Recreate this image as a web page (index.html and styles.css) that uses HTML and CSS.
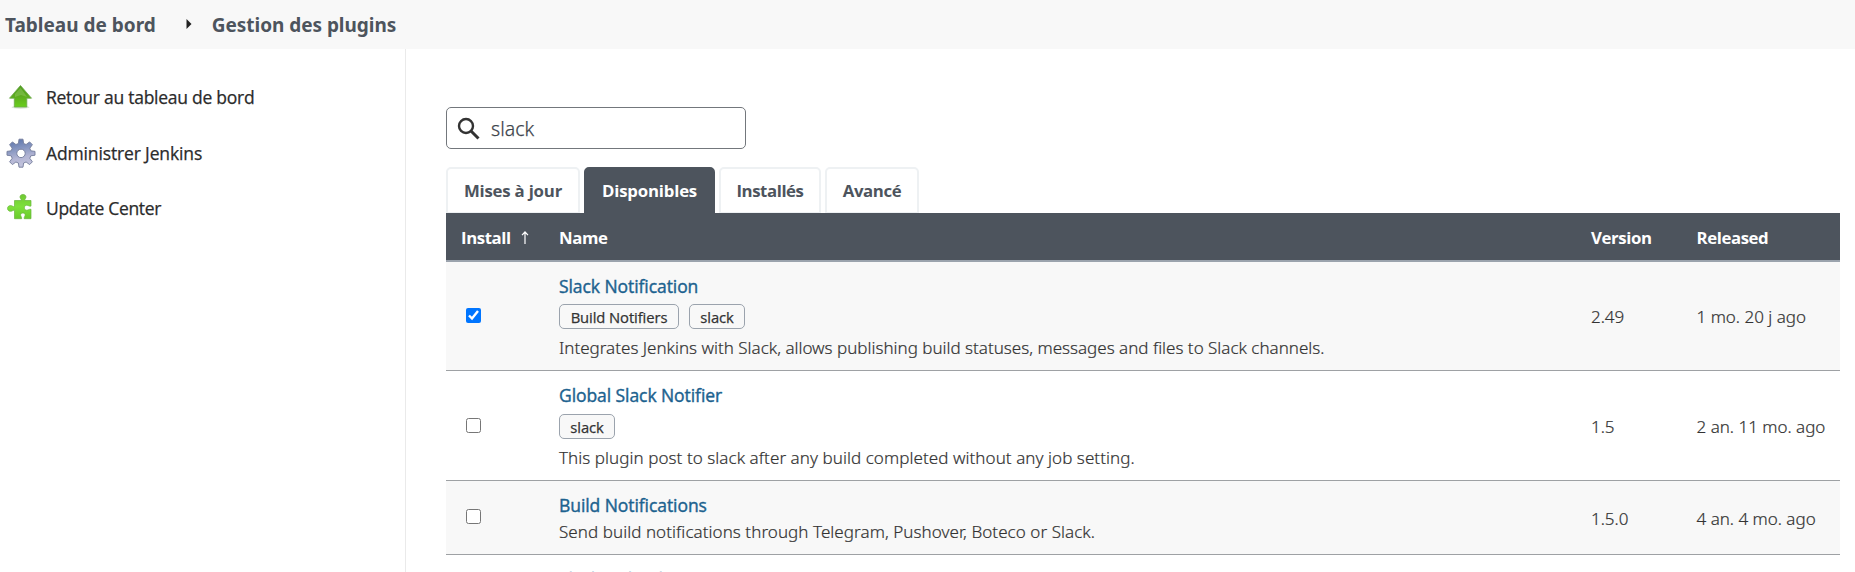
FILE: index.html
```
<!DOCTYPE html>
<html lang="fr">
<head>
<meta charset="utf-8">
<title>Gestion des plugins</title>
<link rel="stylesheet" href="styles.css">
</head>
<body>
<header class="breadcrumbs">
  <span class="crumb">Tableau de bord</span>
  <svg class="crumb-arrow" width="6" height="10" viewBox="0 0 6 10"><path d="M0.5 0 5.5 5 0.5 10z" fill="#222"/></svg>
  <span class="crumb crumb-last">Gestion des plugins</span>
</header>
<div class="page">
  <nav class="side">
    <a class="task">
      <svg width="32" height="32" viewBox="0 0 32 32">
        <defs><linearGradient id="up" x1="0" y1="0" x2="0" y2="1"><stop offset="0" stop-color="#4d9a1c"/><stop offset=".5" stop-color="#5dab1f"/><stop offset="1" stop-color="#69cf1c"/></linearGradient></defs>
        <ellipse cx="16.5" cy="26.3" rx="9" ry="1.4" fill="#d8e3d3"/>
        <path d="M16.500 4.500 27.500 17.200H22.800V26H10.300V17.200H5.500z" fill="url(#up)" stroke="#6ba84a" stroke-width=".8"/>
        <path d="M16.500 6.500 11 13V16L17 14 23 16z" fill="#a5d67c" opacity=".35"/>
      </svg>
      <span class="task-a">Retour au tableau de bord</span></a>
    <a class="task">
      <svg width="32" height="32" viewBox="0 0 32 32">
        <defs><linearGradient id="gear" x1=".4" y1="0" x2=".6" y2="1"><stop offset="0" stop-color="#5f78ae"/><stop offset=".4" stop-color="#8f9cc4"/><stop offset=".65" stop-color="#b3b5d4"/><stop offset="1" stop-color="#c5c6de"/></linearGradient></defs>
        <path fill="url(#gear)" stroke="#737c9b" stroke-width=".9" stroke-linejoin="round" fill-rule="evenodd" d="M15 2.200h4l.6 4.300 2.500 1 3.500-2.600 2.800 2.800-2.600 3.500 1 2.600 4.200.6v3.800l-4.200.6-1 2.500 2.600 3.500-2.800 2.800-3.500-2.600-2.500 1-.6 4.200h-4l-.6-4.200-2.500-1-3.500 2.600-2.800-2.800 2.600-3.500-1-2.500-4.200-.6v-3.800l4.200-.6 1-2.600-2.600-3.500 2.800-2.800 3.500 2.600 2.500-1zM17 12.200a4.200 4.200 0 1 0 0 8.400a4.200 4.200 0 1 0 0-8.400z"/>
      </svg>
      <span class="task-b">Administrer Jenkins</span></a>
    <a class="task">
      <svg width="32" height="32" viewBox="0 0 32 32">
        <defs><linearGradient id="pz" x1="0" y1="0" x2="0" y2="1"><stop offset="0" stop-color="#6fc832"/><stop offset=".5" stop-color="#7ee03c"/><stop offset="1" stop-color="#6acb2b"/></linearGradient></defs>
        <path fill="url(#pz)" stroke="#69b53c" stroke-width=".7" d="M10.500 8.500H17.200C17.500 7 16 6.600 16 5c0-1.600 1.300-2.600 3-2.600s3 1 3 2.600c0 1.600-1.500 2-1.200 3.500H27v5.600c-1.800.4-2.700-.9-4.300-.9-1.500 0-2.300 1.100-2.300 2.500s.8 2.500 2.300 2.500c1.600 0 2.500-1.300 4.300-.9V26.700H20.200c-.3-1.800 1-2.400 1-3.700 0-1.300-1-2-2.300-2s-2.300.7-2.300 2c0 1.300 1.300 1.900 1 3.700H10.500V18.300C9 18 8.300 19.300 6.500 19.300 4.800 19.300 3.500 18 3.500 16.400s1.300-2.800 3-2.800c1.800 0 2.500 1.300 4 1z"/>
      </svg>
      <span class="task-c">Update Center</span></a>
  </nav>
  <main class="main">
    <div class="search">
      <svg width="24" height="24" viewBox="0 0 24 24" fill="none" stroke="#333"><circle cx="9" cy="9" r="7" stroke-width="2.400"/><path d="M14 14 21.500 21.500" stroke-width="3"/></svg>
      <span>slack</span>
    </div>
    <div class="tabs">
      <div class="tab tab-updates">Mises à jour</div>
      <div class="tab tab-available">Disponibles</div>
      <div class="tab tab-installed">Installés</div>
      <div class="tab tab-advanced">Avancé</div>
    </div>
    <div class="row head">
      <div class="sort">Install <svg width="8" height="13" viewBox="0 0 8 13" fill="none" stroke="#fff" stroke-width="1.200"><path d="M4 13V1M1 4.200 4 1 7 4.200"/></svg></div>
      <div>Name</div><div>Version</div><div>Released</div>
    </div>
    <div class="row odd">
      <input class="check" type="checkbox" checked>
      <div><div class="name">Slack Notification</div>
        <div class="labels"><span class="label label-wide">Build Notifiers</span><span class="label">slack</span></div>
        <div class="desc">Integrates Jenkins with Slack, allows publishing build statuses, messages and files to Slack channels.</div></div>
      <div>2.49</div><div>1 mo. 20 j ago</div>
    </div>
    <div class="row roomy">
      <input class="check" type="checkbox">
      <div><div class="name">Global Slack Notifier</div>
        <div class="labels"><span class="label">slack</span></div>
        <div class="desc desc-loose">This plugin post to slack after any build completed without any job setting.</div></div>
      <div>1.5</div><div>2 an. 11 mo. ago</div>
    </div>
    <div class="row odd">
      <input class="check" type="checkbox">
      <div><div class="name">Build Notifications</div>
        <div class="desc desc-loose">Send build notifications through Telegram, Pushover, Boteco or Slack.</div></div>
      <div>1.5.0</div><div>4 an. 4 mo. ago</div>
    </div>
    <div class="row">
      <input class="check" type="checkbox">
      <div><div class="name">Slack Upload</div><div class="desc"></div></div>
      <div></div><div></div>
    </div>
  </main>
</div>
</body>
</html>
```
FILE: styles.css
```
* { box-sizing: border-box; }
body {
  margin: 0;
  height: 572px;
  overflow: hidden;
  display: flex;
  flex-direction: column;
  background: #fff;
  color: #333;
  font-family: "Noto Sans", "Open Sans", sans-serif;
  font-size: 17px;
  line-height: 27px;
}
.breadcrumbs {
  flex: none;
  height: 49px;
  padding: 2px 0 0 5px;
  display: flex;
  align-items: center;
  background: #f8f8f8;
  color: #4d545d;
  font-size: 19px;
  font-weight: 700;
}
.crumb-arrow { margin: 0 20px 4px 30px; }
.crumb-last { letter-spacing: -.04px; }
.page { flex: 1; min-height: 0; display: flex; }
.side {
  flex: none;
  width: 406px;
  padding: 32px 0 0 4px;
  border-right: 1px solid #eaeaea;
  display: flex;
  flex-direction: column;
  gap: 23.5px;
}
.task {
  height: 32px;
  display: flex;
  align-items: center;
  gap: 10px;
  font: 400 17.5px/27px "Open Sans", sans-serif;
  color: #2b2b2b;
  -webkit-text-stroke: .25px #2b2b2b;
}
.task span { padding-top: 1px; }
.task-a { letter-spacing: -.26px; }
.task-b { letter-spacing: -.14px; }
.task-c { letter-spacing: -.33px; }
.main { flex: 1; padding: 58px 15px 0 40px; overflow: hidden; }
.search {
  width: 300px;
  height: 42px;
  padding: 1px 0 0 10px;
  display: flex;
  align-items: center;
  gap: 10px;
  border: 1px solid #73777c;
  border-radius: 5px;
  color: #3d444c;
  font-size: 19.5px;
  font-weight: 300;
  -webkit-text-stroke: .25px #3d444c;
}
.tabs { margin-top: 18px; height: 46px; display: flex; gap: 4px; }
.tab {
  height: 46px;
  padding-top: 8px;
  text-align: center;
  border: 2px solid #eef1f3;
  border-bottom-width: 1px;
  border-radius: 5px 5px 0 0;
  color: #4d545d;
  font: 700 16.8px/27px "Open Sans", sans-serif;
}
.tab-updates { width: 134px; letter-spacing: -.2px; }
.tab-available { width: 131px; letter-spacing: -.18px; color: #fff; background: #4d545d; border-color: #4d545d; }
.tab-installed { width: 102px; letter-spacing: -.42px; }
.tab-advanced { width: 94px; letter-spacing: -.4px; }
.row {
  display: grid;
  grid-template-columns: 98px 1032px 105.500px 1fr;
  align-items: center;
  padding: 10px 0 9px 15px;
  border-bottom: 1px solid #9ea1a4;
  font-weight: 300;
  white-space: nowrap;
  -webkit-text-stroke: .2px #333;
}
.roomy { padding-top: 11px; }
.roomy .name { padding-top: 0; }
.odd { background: #f8f8f8; }
.head {
  height: 49px;
  padding: 2px 0 0 15px;
  border-bottom: 2px solid #9ba3ad;
  background: #4d545d;
  color: #fff;
  font: 700 16.8px/27px "Open Sans", sans-serif;
  letter-spacing: -.4px;
  -webkit-text-stroke: 0;
}
.sort { display: flex; align-items: center; gap: 10px; }
.check { width: 15px; height: 15px; margin: -3px 0 0 5px; }
.name {
  height: 27px;
  padding-top: 1px;
  font: 400 17.5px/27px "Open Sans", sans-serif;
  letter-spacing: -.07px;
  color: #1c628f;
  -webkit-text-stroke: .4px #1c628f;
}
.labels { display: flex; gap: 10px; padding: 5px 0; }
.label {
  width: 56px;
  height: 25px;
  border: 1px solid #9ba3ad;
  border-radius: 5px;
  background: #f8f8f8;
  text-align: center;
  font: 400 14.8px/24px "Open Sans", sans-serif;
  letter-spacing: -.1px;
  -webkit-text-stroke: .25px #333;
}
.label-wide { width: 120px; }
.desc { height: 27px; }
.desc-loose { letter-spacing: .06px; }
```
